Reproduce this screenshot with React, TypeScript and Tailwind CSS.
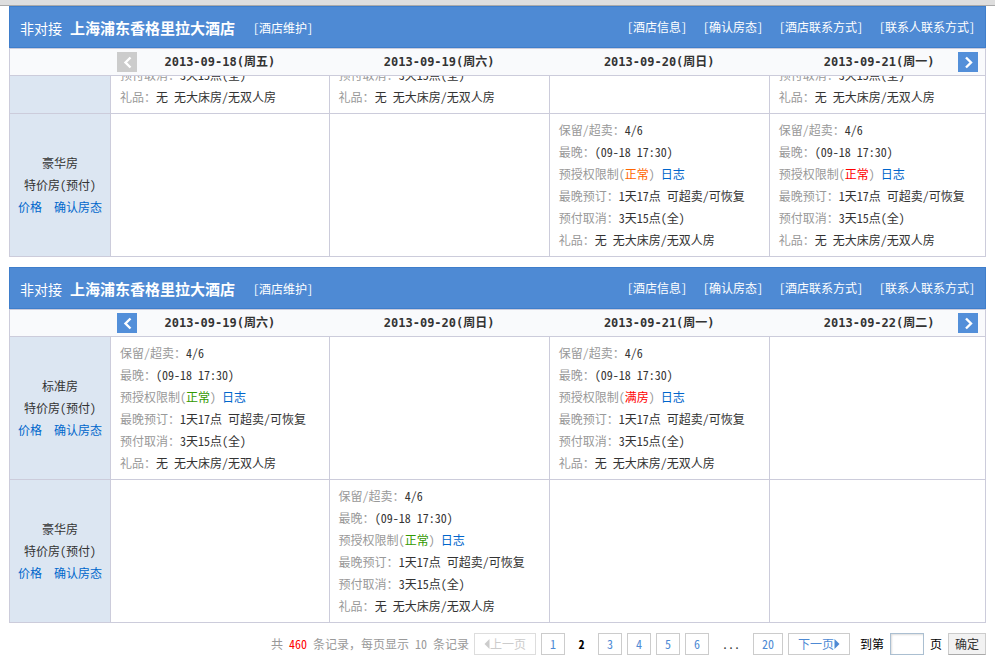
import type { ReactNode } from 'react';

type Tone = 'green' | 'orange' | 'red';

const toneClass: Record<Tone, string> = {
  green: 'text-[#339900]',
  orange: 'text-[#ff6600]',
  red: 'text-[#ff0000]',
};

interface Stock {
  status: string;
  tone: Tone;
}

interface Room {
  name: string;
  clipped?: boolean;
  days: (Stock | null)[];
}

interface Hotel {
  id: string;
  prevDisabled?: boolean;
  dates: string[];
  rooms: Room[];
}

const ok = (tone: Tone): Stock => ({ status: '正常', tone });

const hotels: Hotel[] = [
  {
    id: 'a',
    prevDisabled: true,
    dates: ['2013-09-18(周五)', '2013-09-19(周六)', '2013-09-20(周日)', '2013-09-21(周一)'],
    rooms: [
      { name: '标准房', clipped: true, days: [ok('green'), ok('green'), null, ok('green')] },
      { name: '豪华房', days: [null, null, ok('orange'), ok('red')] },
    ],
  },
  {
    id: 'b',
    dates: ['2013-09-19(周六)', '2013-09-20(周日)', '2013-09-21(周一)', '2013-09-22(周二)'],
    rooms: [
      { name: '标准房', days: [ok('green'), null, { status: '满房', tone: 'red' }, null] },
      { name: '豪华房', days: [null, ok('green'), null, null] },
    ],
  },
];

const contactLinks = ['[酒店信息]', '[确认房态]', '[酒店联系方式]', '[联系人联系方式]'];

function Line({ label, children }: { label: string; children: ReactNode }) {
  return (
    <p className="whitespace-pre">
      <span className="text-[#999999]">{label}</span>
      {children}
    </p>
  );
}

function StockCell({ stock, clipped }: { stock: Stock | null; clipped?: boolean }) {
  if (!stock) return null;
  return (
    <div className="px-[9px] py-[5px]">
      {!clipped && (
        <>
          <Line label="保留/超卖：">4/6</Line>
          <Line label="最晚：">(09-18 17:30)</Line>
          <p className="whitespace-pre text-[#999999]">
            预授权限制(<span className={toneClass[stock.tone]}>{stock.status}</span>){' '}
            <a href="#log" className="text-[#0066cc]">日志</a>
          </p>
          <Line label="最晚预订：">1天17点 可超卖/可恢复</Line>
        </>
      )}
      <Line label="预付取消：">3天15点(全)</Line>
      <Line label="礼品：">无 无大床房/无双人房</Line>
    </div>
  );
}

function NavButton({ dir, disabled }: { dir: 'prev' | 'next'; disabled?: boolean }) {
  return (
    <button
      type="button"
      disabled={disabled}
      aria-label={dir === 'prev' ? '前一天' : '后一天'}
      className={`flex size-5 shrink-0 items-center justify-center ${disabled ? 'bg-[#cccccc]' : 'bg-[#538fd9]'}`}
    >
      <svg width="20" height="20" viewBox="0 0 20 20" fill="none" stroke="#ffffff" strokeWidth="2.4">
        <path d={dir === 'prev' ? 'M13.5 5.5 8.5 10.5 13.5 15.5' : 'M8 5.5 13 10.5 8 15.5'} />
      </svg>
    </button>
  );
}

function HotelCard({ hotel }: { hotel: Hotel }) {
  const last = hotel.dates.length - 1;
  const colWidth = ['w-[22.4%]', 'w-[22.55%]', 'w-[22.55%]', ''];
  return (
    <section>
      <header className="flex h-[42px] items-center border border-[#3f7ecb] bg-[#4e8ad4] px-[10px] text-white">
        <div className="flex items-center pt-[2px]">
          <span className="text-[14px]">非对接</span>
          <h2 className="ml-2 text-[15px] font-bold">上海浦东香格里拉大酒店</h2>
          <a href="#maintain" className="ml-[18px]">[酒店维护]</a>
        </div>
        <nav className="ml-auto flex gap-4">
          {contactLinks.map((text) => (
            <a key={text} href="#contact">{text}</a>
          ))}
        </nav>
      </header>
      <table className="w-full table-fixed border-collapse">
        <thead>
          <tr className="h-[27px] border border-[#ccccdb] bg-[#f9fafc]">
            <th className="w-[101px] p-0" aria-label="房型" />
            {hotel.dates.map((date, i) => (
              <th
                key={date}
                className={`p-0 font-['DejaVu_Sans_Mono','Noto_Sans_CJK_SC',monospace] font-bold ${colWidth[i]}`}
              >
                {i === 0 && (
                  <div className="flex items-center px-[6px]">
                    <NavButton dir="prev" disabled={hotel.prevDisabled} />
                    <span className="flex-1 pr-5">{date}</span>
                  </div>
                )}
                {i > 0 && i < last && date}
                {i === last && (
                  <div className="flex items-center pr-[7px] pl-[11px]">
                    <span className="flex-1 pl-5">{date}</span>
                    <NavButton dir="next" />
                  </div>
                )}
              </th>
            ))}
          </tr>
        </thead>
        <tbody>
          {hotel.rooms.map((room) => (
            <tr key={room.name}>
              <th scope="row" className="border border-[#ccccdb] bg-[#dce6f2] p-0 text-center font-normal">
                {!room.clipped && (
                  <>
                    <p>{room.name}</p>
                    <p>特价房(预付)</p>
                    <p className="flex justify-center gap-3 text-[#0066cc]">
                      <a href="#price">价格</a>
                      <a href="#confirm">确认房态</a>
                    </p>
                  </>
                )}
              </th>
              {room.days.map((stock, i) => (
                <td key={i} className="border border-[#ccccdb] p-0 align-top">
                  <div className={`flex flex-col justify-end overflow-hidden ${room.clipped ? 'h-[37px]' : 'h-[142px]'}`}>
                    <StockCell stock={stock} clipped={room.clipped} />
                  </div>
                </td>
              ))}
            </tr>
          ))}
        </tbody>
      </table>
    </section>
  );
}

const pageClass = 'flex h-[22px] items-center justify-center border border-[#cccccc] text-[#4e8ad4]';

function PageButton({ page }: { page: number }) {
  return (
    <button type="button" className={`${pageClass} ${page > 9 ? 'w-[30px]' : 'w-6'}`}>
      {page}
    </button>
  );
}

function Pagination() {
  return (
    <div className="mt-[10px] flex items-center justify-end gap-[5px]">
      <p className="text-[#999999]">
        共 <span className="text-[#ff0000]">460</span> 条记录，每页显示 10 条记录
      </p>
      <button type="button" disabled className="flex h-[22px] w-[62px] items-center justify-center border border-[#dddddd] text-[#cccccc]">
        <svg width="6" height="10" viewBox="0 0 6 10" fill="currentColor">
          <path d="M5.5 0v10L0.5 5z" />
        </svg>
        上一页
      </button>
      <PageButton page={1} />
      <span className="w-[23px] text-center font-bold text-black">2</span>
      {[3, 4, 5, 6].map((page) => (
        <PageButton key={page} page={page} />
      ))}
      <span className="w-[34px] text-center">...</span>
      <PageButton page={20} />
      <button type="button" className={`${pageClass} w-[62px]`}>
        下一页
        <svg width="6" height="10" viewBox="0 0 6 10" fill="currentColor">
          <path d="M0.5 0v10L5.5 5z" />
        </svg>
      </button>
      <div className="ml-[5px] flex items-center gap-[6px]">
        <label htmlFor="page" className="text-black">到第</label>
        <input
          id="page"
          type="text"
          className="h-[22px] w-[34px] border border-[#abbfd1] bg-white px-1 shadow-[inset_1px_1px_2px_#dddddd]"
        />
        <span className="text-black">页</span>
        <button type="button" className="h-[22px] w-[38px] border border-[#cccccc] border-b-[#aaaaaa] bg-[#f2f2f2] leading-5">
          确定
        </button>
      </div>
    </div>
  );
}

export default function App() {
  return (
    <div className="min-h-screen bg-white font-['Noto_Sans_Mono_CJK_SC','Noto_Sans_CJK_SC',sans-serif] text-[12px] leading-[22px] text-[#333333]">
      <div className="h-[6px] border-b border-[#aaaaaa] bg-[#dedede]" />
      <main className="px-[9px] pb-2">
        <div className="flex flex-col gap-[10px]">
          {hotels.map((hotel) => (
            <HotelCard key={hotel.id} hotel={hotel} />
          ))}
        </div>
        <Pagination />
      </main>
    </div>
  );
}
